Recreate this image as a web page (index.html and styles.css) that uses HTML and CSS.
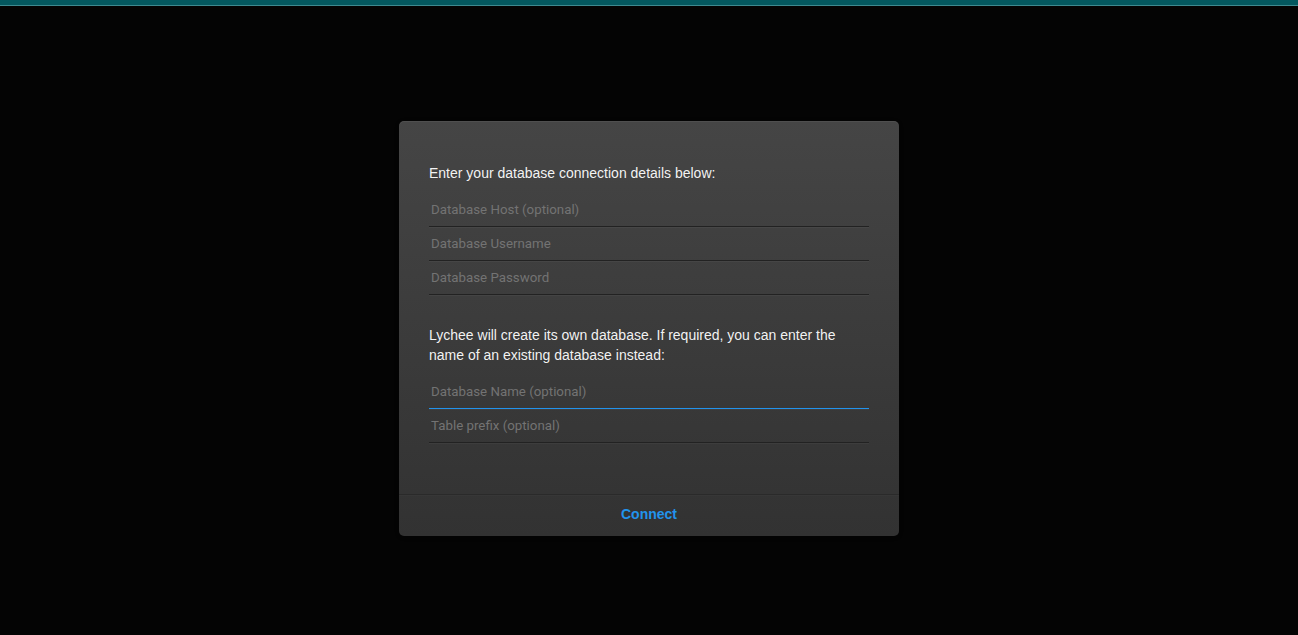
FILE: index.html
```html
<!DOCTYPE html>
<html lang="en">
<head>
<meta charset="utf-8">
<title>Lychee Setup</title>
<link rel="stylesheet" href="styles.css">
</head>
<body>
<div class="topbar"></div>
<main class="stage">
  <div class="modal">
    <div class="modal-content">
      <p class="msg">Enter your database connection details below:</p>
      <input class="field" type="text" placeholder="Database Host (optional)">
      <input class="field" type="text" placeholder="Database Username">
      <input class="field" type="password" placeholder="Database Password">
      <p class="msg msg-second">Lychee will create its own database. If required, you can enter the name of an existing database instead:</p>
      <input class="field field-active" type="text" placeholder="Database Name (optional)" autofocus>
      <input class="field" type="text" placeholder="Table prefix (optional)">
    </div>
    <div class="modal-buttons">
      <button class="btn-connect" type="button">Connect</button>
    </div>
  </div>
</main>
</body>
</html>
```
FILE: styles.css
```css
html, body {
  margin: 0;
  padding: 0;
  height: 100%;
}
body {
  background: #040404;
  font-family: "Liberation Sans", Arial, sans-serif;
  display: flex;
  flex-direction: column;
}
.topbar {
  height: 5px;
  background: #04585f;
  border-bottom: 1px solid #3e8a90;
  flex: none;
}
.stage {
  display: flex;
  justify-content: center;
  padding-top: 115px;
}
.modal {
  width: 500px;
  border-radius: 5px;
  background: linear-gradient(to bottom, #454545, #323232);
  box-shadow: 0 1px 4px rgba(0,0,0,.3), inset 0 1px 0 rgba(255,255,255,.06);
  overflow: hidden;
  display: flex;
  flex-direction: column;
}
.modal-content {
  padding: 42px 30px 51px;
  display: flex;
  flex-direction: column;
}
.msg {
  margin: 0 0 10px;
  color: rgba(255,255,255,.95);
  font-size: 14px;
  line-height: 20px;
}
.msg-second {
  margin-top: 30px;
  margin-bottom: 10px;
}
.field {
  display: block;
  box-sizing: border-box;
  width: 100%;
  height: 34px;
  margin: 0;
  padding: 8px 2px 9px;
  background: transparent;
  color: #fff;
  caret-color: #ddd;
  border: none;
  border-bottom: 1px solid #222;
  border-radius: 0;
  box-shadow: 0 1px 0 rgba(255,255,255,.04);
  outline: none;
  font-family: Roboto, "Liberation Sans", sans-serif;
  font-size: 13.3px;
  line-height: 16px;
}
.field::placeholder {
  color: #737373;
  opacity: 1;
}
.field.field-active {
  border-bottom: 1px solid #2293ec;
}
.modal-buttons {
  display: flex;
  border-top: 1px solid #2a2a2a;
  box-shadow: inset 0 1px 0 rgba(255,255,255,.02);
}
.btn-connect {
  flex: 1;
  height: 41px;
  padding: 0 0 4px;
  margin: 0;
  background: transparent;
  border: none;
  color: #2293ec;
  font-family: "Liberation Sans", Arial, sans-serif;
  font-size: 14px;
  font-weight: 700;
  cursor: pointer;
}
```
